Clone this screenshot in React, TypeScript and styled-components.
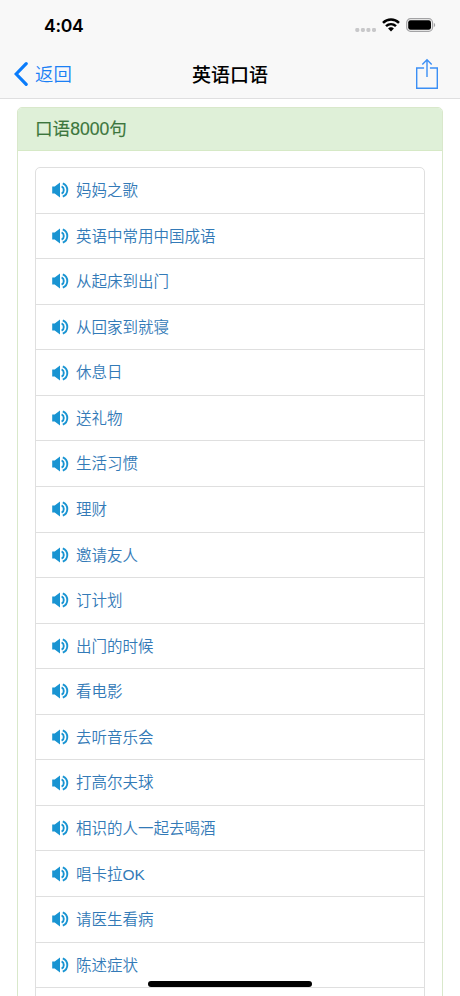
import React from 'react';
import styled, { createGlobalStyle } from 'styled-components';

const GlobalStyle = createGlobalStyle`
  * { box-sizing: border-box; }
  html, body { margin: 0; padding: 0; background: #fff; overflow: hidden; }
  body { font-family: "Liberation Sans", "Noto Sans CJK SC", sans-serif; }
`;

const Screen = styled.div`
  position: relative;
  width: 460px;
  height: 996px;
  overflow: hidden;
  background: #fff;
`;

const Header = styled.header`
  height: 99px;
  background: #f8f8f8;
  border-bottom: 1px solid #dfdfe0;
`;

const StatusBar = styled.div`
  display: flex;
  align-items: center;
  justify-content: space-between;
  height: 50px;
  padding: 0 24px 0 44px;
`;

const Clock = styled.span`
  padding-top: 2px;
  font: 600 17.6px/22px Inter, sans-serif;
  letter-spacing: -0.3px;
  color: #000;
`;

const StatusIcons = styled.div`
  display: flex;
  align-items: center;
`;

const NavBar = styled.nav`
  display: grid;
  grid-template-columns: 100px 1fr 100px;
  align-items: center;
  height: 48px;
`;

const BackButton = styled.a`
  display: flex;
  align-items: center;
  gap: 7px;
  padding-left: 14px;
  font: 350 18.4px/28px "Noto Sans CJK SC", sans-serif;
  color: #1a80f5;
`;

const BackLabel = styled.span`
  padding-bottom: 2px;
`;

const Title = styled.h1`
  margin: 0;
  padding-bottom: 1px;
  text-align: center;
  font: 500 19px/28px "Noto Sans CJK SC", sans-serif;
  color: #000;
`;

const ShareButton = styled.a`
  display: flex;
  justify-content: flex-end;
  padding-right: 21px;
`;

const Panel = styled.section`
  margin: 8px 17px 0;
  border: 1px solid #d9e8cb;
  border-radius: 5px;
`;

const PanelHeading = styled.h2`
  margin: 0;
  height: 43px;
  padding-left: 17px;
  border-bottom: 1px solid #d6e9c6;
  border-radius: 4px 4px 0 0;
  background: #dff0d8;
  font: 400 17.6px/42px "Liberation Sans", "Noto Sans CJK SC", sans-serif;
  -webkit-text-stroke: 0.15px #3c763d;
  color: #3c763d;
`;

const List = styled.ul`
  list-style: none;
  margin: 16px 17px;
  padding: 0;
  border: 1px solid #dfdfdf;
  border-radius: 5px;
`;

const Row = styled.li`
  display: flex;
  align-items: center;
  gap: 7px;
  height: 45.57px;
  padding-left: 16px;
  border-bottom: 1px solid #dfdfdf;
  font-size: 15.5px;
  font-weight: 350;
  line-height: 24px;
  color: #337ab7;
`;

const Topic = styled.span`
  padding-top: 1.6px;
`;

const HomeIndicator = styled.div`
  position: absolute;
  left: 148px;
  bottom: 9px;
  width: 164px;
  height: 6px;
  border-radius: 3px;
  background: #000;
`;

const SignalIcon = () => (
  <svg width="22" height="20" viewBox="0 0 22 20" fill="#c8c8ca">
    {[0, 5.6, 11.1, 16.7].map((x) => (
      <rect key={x} x={x + 0.3} y="13" width="4" height="4" rx="1.4" />
    ))}
  </svg>
);

const WifiIcon = () => (
  <svg width="18" height="14" viewBox="0 0 18 14" fill="none" stroke="#000" strokeWidth="2.5">
    <path d="M1 4.9C5.5.5 12.5.5 17 4.9" />
    <path d="M4 8.2c2.9-2.7 7.1-2.7 10 0" />
    <path d="M6.1 10.6C7.6 8.8 10.4 8.8 11.9 10.6L9 13.6Z" fill="#000" stroke="none" />
  </svg>
);

const BatteryIcon = () => (
  <svg width="30" height="14" viewBox="0 0 30 14">
    <rect x="0.7" y="0.7" width="25.8" height="12.6" rx="3.8" fill="none" stroke="#a3a3a5" strokeWidth="1.2" />
    <rect x="2.2" y="2.2" width="22.8" height="9.6" rx="2.3" />
    <path d="M27.8 4.8c1.9.8 1.9 3.6 0 4.4Z" fill="#a3a3a5" />
  </svg>
);

const BackIcon = () => (
  <svg width="14" height="24" viewBox="0 0 14 24" fill="none" stroke="#0a7cfb" strokeWidth="3.2" strokeLinecap="round">
    <path d="M12.2 1.7 2.2 12l10 10.3" />
  </svg>
);

const ShareIcon = () => (
  <svg width="24" height="32" viewBox="0 0 24 32" fill="none" stroke="#3b8ff5" strokeWidth="1.4">
    <path d="M9.1 10H1.7v20.2h20.6V10h-7.4M12 19V2M7.3 6.4 12 1.7l4.7 4.7" />
  </svg>
);

const SpeakerIcon = () => (
  <svg width="17" height="16" viewBox="0 0 17 16" fill="none" stroke="#1994d2" strokeWidth="1.9">
    <path d="M.2 4.6h2.5L8 .6v14.8l-5.3-4H.2Z" fill="#1994d2" stroke="none" />
    <path d="M9.6 4.4c2.9 1.3 2.9 5.9 0 7.2M10.8 1.3c6 2.7 6 10.7 0 13.4" />
  </svg>
);

const topics = [
  '妈妈之歌', '英语中常用中国成语', '从起床到出门', '从回家到就寝', '休息日', '送礼物',
  '生活习惯', '理财', '邀请友人', '订计划', '出门的时候', '看电影', '去听音乐会',
  '打高尔夫球', '相识的人一起去喝酒', '唱卡拉OK', '请医生看病', '陈述症状', '',
];

const SignalSlot = styled.span`
  display: flex;
  margin-right: 5px;
`;

const WifiSlot = styled.span`
  display: flex;
  margin-right: 6px;
`;

export default function App() {
  return (
    <Screen>
      <GlobalStyle />
      <Header>
        <StatusBar>
          <Clock>4:04</Clock>
          <StatusIcons>
            <SignalSlot><SignalIcon /></SignalSlot>
            <WifiSlot><WifiIcon /></WifiSlot>
            <BatteryIcon />
          </StatusIcons>
        </StatusBar>
        <NavBar>
          <BackButton><BackIcon /><BackLabel>返回</BackLabel></BackButton>
          <Title>英语口语</Title>
          <ShareButton><ShareIcon /></ShareButton>
        </NavBar>
      </Header>
      <Panel>
        <PanelHeading>口语8000句</PanelHeading>
        <List>
          {topics.map((topic) => (
            <Row key={topic}>
              {topic && <SpeakerIcon />}
              <Topic>{topic}</Topic>
            </Row>
          ))}
        </List>
      </Panel>
      <HomeIndicator />
    </Screen>
  );
}
